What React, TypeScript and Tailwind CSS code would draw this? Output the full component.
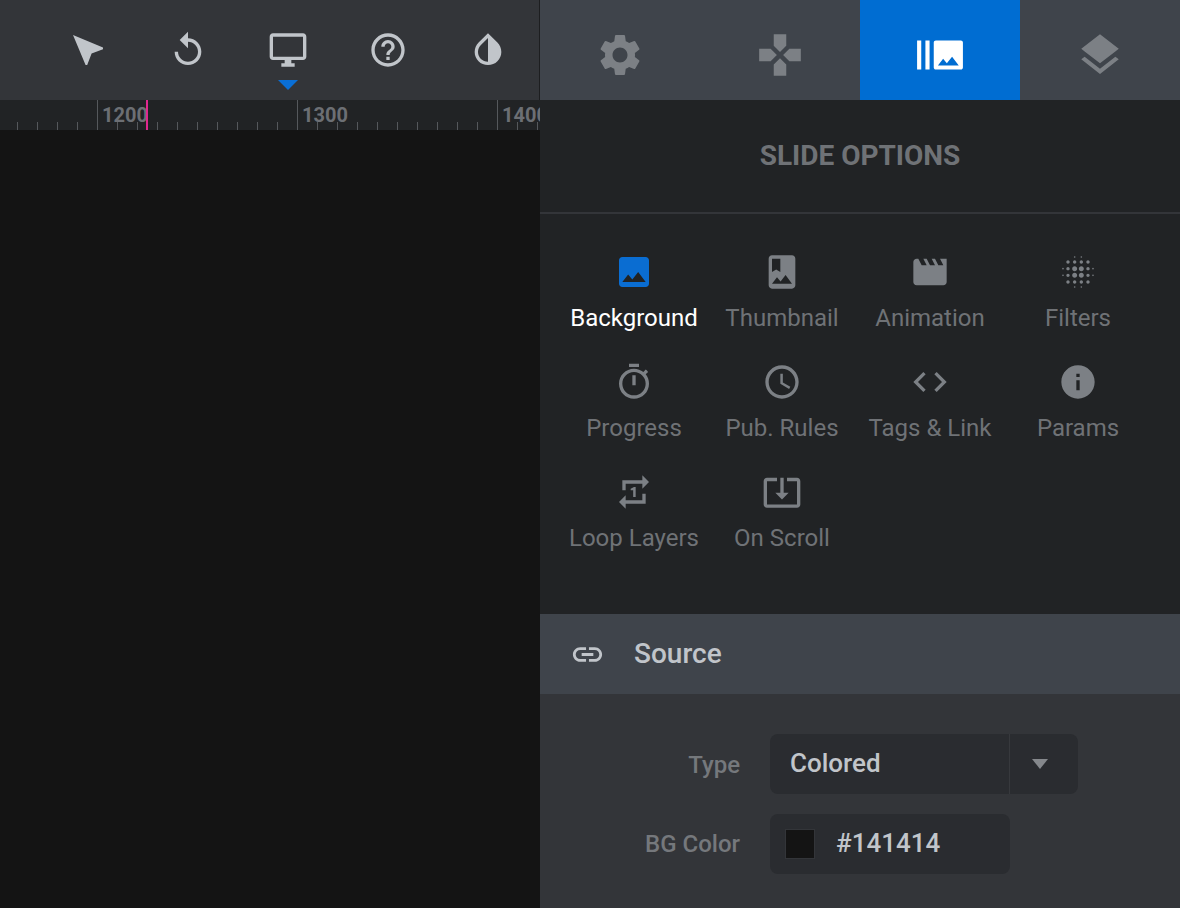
import React from "react";
import {
  MdNearMe, MdReplay, MdHelpOutline, MdInvertColors, MdSettings, MdGamepad, MdBurstMode, MdLayers,
  MdPhoto, MdMovie, MdBlurOn, MdAccessTime, MdCode, MdInfo, MdRepeatOne, MdSystemUpdateAlt, MdLink,
} from "react-icons/md";

type IconProps = { size?: number; className?: string };

function Glyph({ d, size = 40, className }: IconProps & { d: string }) {
  return (
    <svg width={size} height={size} viewBox="0 0 24 24" fill="currentColor" className={className}>
      <path fillRule="evenodd" d={d} />
    </svg>
  );
}

const Desktop = (p: IconProps) => (
  <Glyph {...p} d="M21 2H3c-1.1 0-2 .9-2 2v12c0 1.1.9 2 2 2h7v2H8v2h8v-2h-2v-2h7c1.1 0 2-.9 2-2V4c0-1.1-.9-2-2-2zm0 14H3V4h18v12z" />
);
const Timer = (p: IconProps) => (
  <Glyph {...p} d="M15 1H9v2h6V1zm-4 13h2V8h-2v6zm8.03-6.61l1.42-1.42c-.43-.51-.9-.99-1.41-1.41l-1.42 1.42C16.07 4.74 14.12 4 12 4c-4.97 0-9 4.03-9 9s4.02 9 9 9 9-4.03 9-9c0-2.12-.74-4.07-1.97-5.61zM12 20c-3.87 0-7-3.13-7-7s3.13-7 7-7 7 3.13 7 7-3.13 7-7 7z" />
);
const Album = (p: IconProps) => (
  <Glyph {...p} d="M18 2H6c-1.1 0-2 .9-2 2v16c0 1.1.9 2 2 2h12c1.1 0 2-.9 2-2V4c0-1.1-.9-2-2-2zM6 4h5v8l-2.5-1.5L6 12V4zm0 15l3-3.86 2.14 2.58 3-3.86L18 19H6z" />
);

const tools = [
  { Icon: MdNearMe, flip: true },
  { Icon: MdReplay },
  { Icon: Desktop, active: true },
  { Icon: MdHelpOutline },
  { Icon: MdInvertColors },
];

const tabs = [
  { Icon: MdSettings },
  { Icon: MdGamepad },
  { Icon: MdBurstMode, active: true },
  { Icon: MdLayers },
];

const options = [
  { Icon: MdPhoto, label: "Background", active: true },
  { Icon: Album, label: "Thumbnail" },
  { Icon: MdMovie, label: "Animation" },
  { Icon: MdBlurOn, label: "Filters" },
  { Icon: Timer, label: "Progress" },
  { Icon: MdAccessTime, label: "Pub. Rules" },
  { Icon: MdCode, label: "Tags & Link" },
  { Icon: MdInfo, label: "Params" },
  { Icon: MdRepeatOne, label: "Loop Layers" },
  { Icon: MdSystemUpdateAlt, label: "On Scroll" },
];

const ticks = Array.from({ length: 28 }, (_, i) => i);

function Ruler() {
  return (
    <div className="relative flex h-[30px] shrink-0 overflow-hidden bg-[#212325]">
      <div className="flex -ml-[3px]">
        {ticks.map((i) => {
          const major = i % 10 === 5;
          return major ? (
            <div key={i} className="h-[30px] w-5 shrink-0 border-l border-[#55585c]">
              <span className="ml-[4px] block whitespace-nowrap text-[20px] font-bold leading-[30px] text-[#6c6f74]">
                {1200 + ((i - 5) / 10) * 100}
              </span>
            </div>
          ) : (
            <div key={i} className="flex h-[30px] w-5 shrink-0 items-end">
              <div className="h-2 w-px bg-[#55585c]" />
            </div>
          );
        })}
      </div>
      <div className="absolute left-[146px] top-0 h-[30px] w-0.5 bg-[#e0288f]" />
    </div>
  );
}

export default function App() {
  return (
    <div className="flex h-[908px] w-[1180px] overflow-hidden font-['Roboto',sans-serif]">
      <div className="flex h-full w-[540px] shrink-0 flex-col bg-[#141414]">
        <div className="flex h-[100px] shrink-0 border-r border-[#1d1e20] bg-[#333539] pl-[38px]">
          {tools.map(({ Icon, flip, active }, i) => (
            <div key={i} className="relative flex h-full w-[100px] shrink-0 justify-center pt-[30px]">
              <Icon size={40} className={flip ? "-scale-x-100 text-[#c1c5ca]" : "text-[#c1c5ca]"} />
              {active && (
                <div className="absolute left-[40px] top-[80px] h-0 w-0 border-x-[10px] border-t-[10px] border-x-transparent border-t-[#0a6fd6]" />
              )}
            </div>
          ))}
        </div>
        <Ruler />
      </div>

      <div className="flex h-full w-[640px] shrink-0 flex-col bg-[#212325]">
        <div className="grid h-[100px] shrink-0 grid-cols-4 bg-[#3f444b]">
          {tabs.map(({ Icon, active }, i) => (
            <div key={i} className={active ? "flex justify-center bg-[#006dd2] pt-[30px] text-white" : "flex justify-center pt-[30px] text-[#7c8085]"}>
              <Icon size={50} />
            </div>
          ))}
        </div>

        <div className="flex h-[114px] shrink-0 items-center justify-center border-b-2 border-[#333539]">
          <span className="text-[28px] font-bold text-[#6f7276]">SLIDE OPTIONS</span>
        </div>

        <div className="grid shrink-0 grid-cols-[repeat(4,148px)] px-5 pb-8 pt-[38px]">
          {options.map(({ Icon, label, active }) => (
            <div key={label} className="flex h-[110px] flex-col items-center">
              <Icon size={40} className={active ? "text-[#0a6dd2]" : "text-[#7c8085]"} />
              <span className={active ? "mt-2 whitespace-nowrap text-[24px] leading-[36px] text-white" : "mt-2 whitespace-nowrap text-[24px] leading-[36px] text-[#6f7276]"}>
                {label}
              </span>
            </div>
          ))}
        </div>

        <div className="flex h-20 shrink-0 items-center bg-[#3f444b] pl-[30px]">
          <MdLink size={35} className="shrink-0 text-[#c1c5ca]" />
          <span className="ml-[29px] text-[28px] font-medium text-[#c1c5ca]">Source</span>
        </div>

        <div className="flex flex-1 flex-col gap-5 bg-[#333539] pt-10">
          <div className="flex h-[60px] items-center">
            <label className="w-[200px] pt-0.5 text-right text-[24px] font-medium text-[#75787c]">Type</label>
            <div className="ml-[30px] flex h-[60px] w-[308px] rounded-lg bg-[#2a2c30]">
              <div className="flex flex-1 items-center border-r border-[#37393d] pb-0.5 pl-5 text-[26px] font-medium text-[#c1c5ca]">Colored</div>
              <div className="flex w-[68px] items-center justify-center pr-[9px]">
                <div className="h-0 w-0 border-x-[8px] border-t-[10px] border-x-transparent border-t-[#85888c]" />
              </div>
            </div>
          </div>
          <div className="flex h-[60px] items-center">
            <label className="w-[200px] text-right text-[24px] font-medium text-[#75787c]">BG Color</label>
            <div className="ml-[30px] flex h-[60px] w-[240px] items-center rounded-lg bg-[#2a2c30] pl-[15px]">
              <div className="h-[30px] w-[30px] border border-[#333539] bg-[#141414]" />
              <span className="ml-[21px] pb-0.5 text-[26px] font-medium text-[#c1c5ca]">#141414</span>
            </div>
          </div>
        </div>
      </div>
    </div>
  );
}
